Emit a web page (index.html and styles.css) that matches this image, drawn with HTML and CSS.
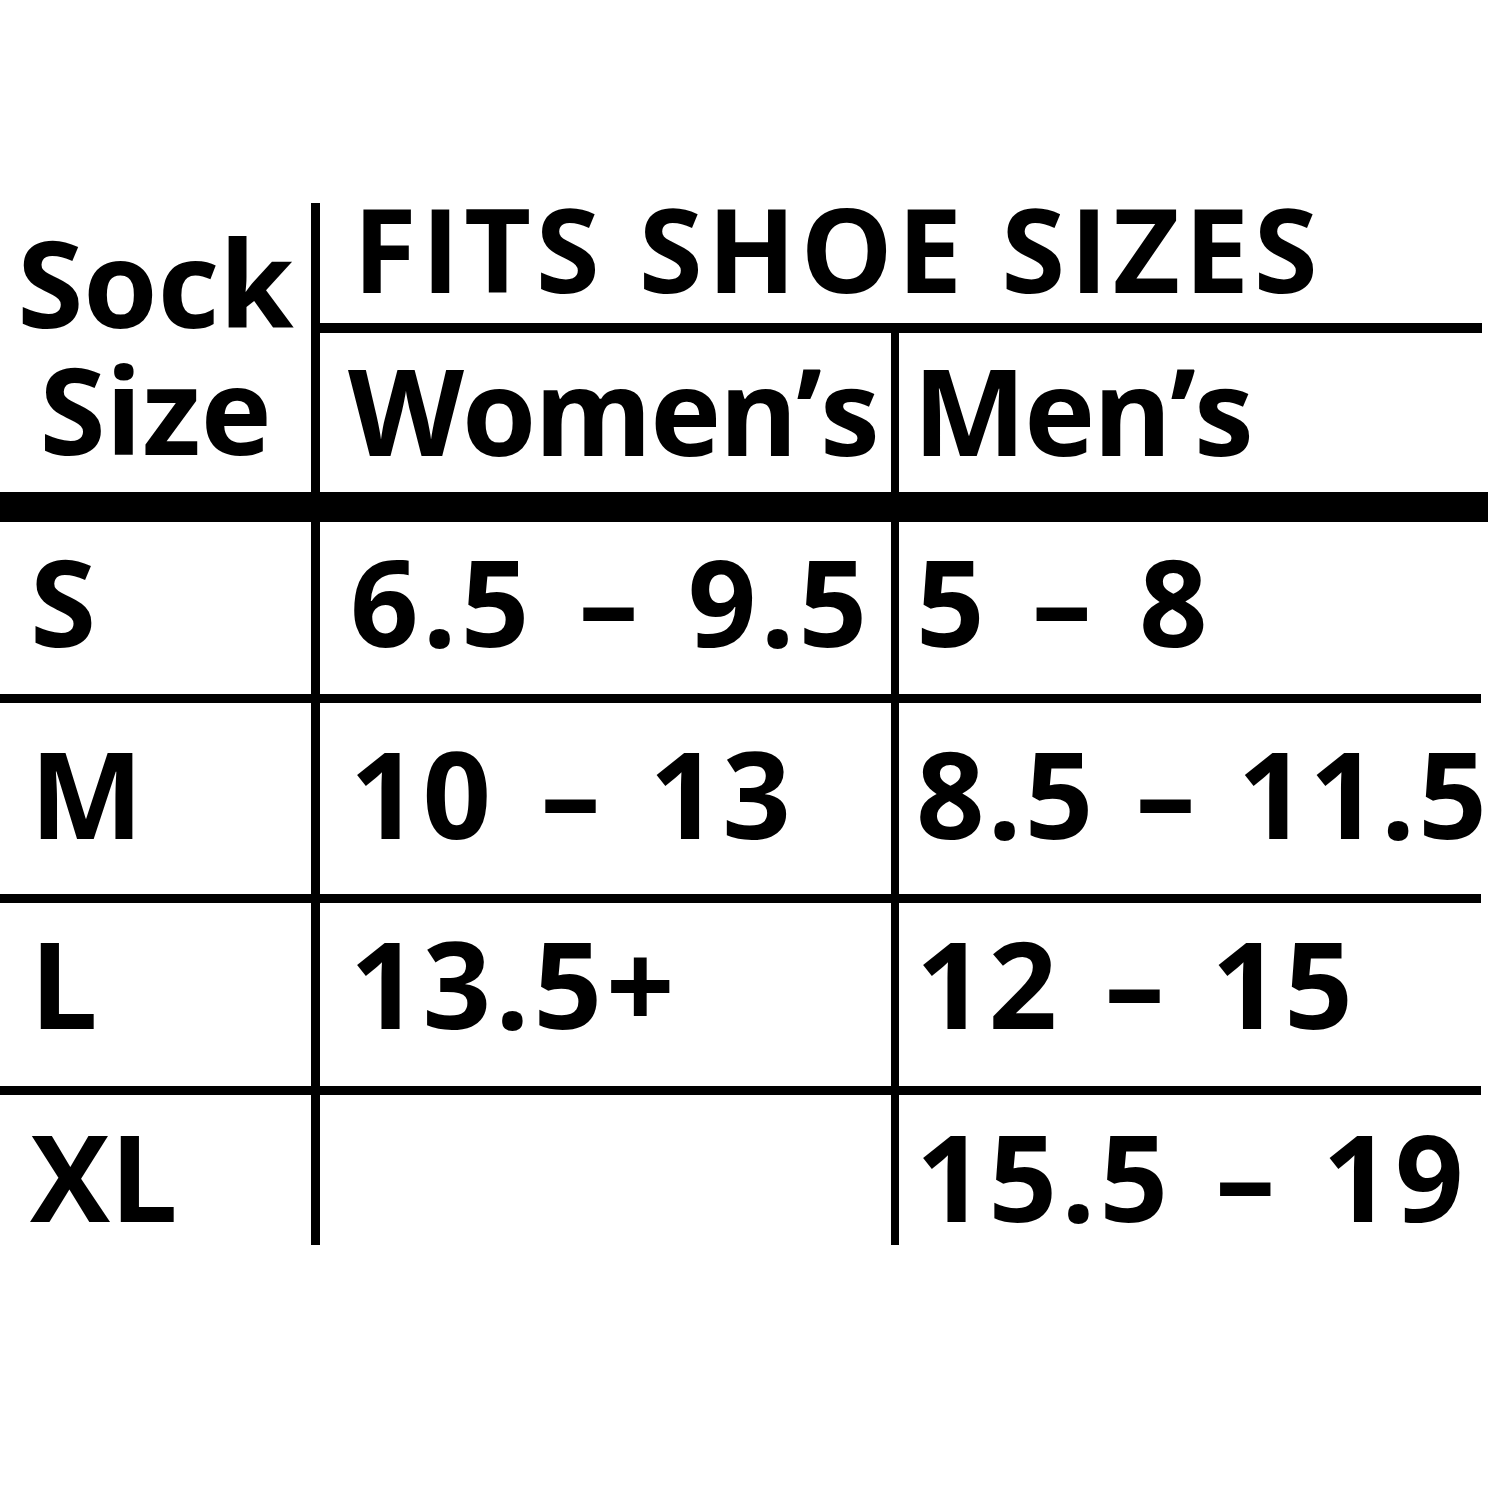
FILE: index.html
```html
<!DOCTYPE html>
<html lang="en">
<head>
<meta charset="utf-8">
<title>Sock Size Chart</title>
<link rel="stylesheet" href="styles.css">
</head>
<body>
<div class="chart">
  <div class="head">
    <div class="sock">
      <div class="sock-line">Sock</div>
      <div class="sock-line">Size</div>
    </div>
    <div class="fits">
      <div class="fits-title">FITS SHOE SIZES</div>
      <div class="genders">
        <div class="women">Women’s</div>
        <div class="men">Men’s</div>
      </div>
    </div>
  </div>
  <div class="bar"></div>
  <div class="rows">
    <div class="row row-s">
      <div class="c size">S</div>
      <div class="c w">6.5 – 9.5</div>
      <div class="c m">5 – 8</div>
    </div>
    <div class="row row-m">
      <div class="c size">M</div>
      <div class="c w">10 – 13</div>
      <div class="c m">8.5 – 11.5</div>
    </div>
    <div class="row row-l">
      <div class="c size">L</div>
      <div class="c w">13.5+</div>
      <div class="c m">12 – 15</div>
    </div>
    <div class="row row-xl">
      <div class="c size">XL</div>
      <div class="c w"></div>
      <div class="c m">15.5 – 19</div>
    </div>
  </div>
</div>
</body>
</html>
```
FILE: styles.css
```css
* { box-sizing: border-box; }
html, body { margin: 0; padding: 0; background: #fff; }
body {
  font-family: "Open Sans", "Noto Sans", sans-serif;
  font-weight: 700;
  color: #000;
  overflow: hidden;
}
.chart {
  padding-top: 203px;
  width: 1500px;
}
.head {
  display: flex;
  width: 1482px;
  height: 289px;
}
.sock {
  width: 311px;
  flex-shrink: 0;
  text-align: center;
  font-size: 120px;
  padding-top: 29px;
}
.sock-line {
  height: 127px;
  line-height: 100px;
}
.fits {
  flex: 1;
  border-left: 9px solid #000;
  display: flex;
  flex-direction: column;
}
.fits-title {
  height: 130px;
  border-bottom: 10px solid #000;
  font-size: 116px;
  line-height: 90px;
  padding-left: 33px;
  letter-spacing: 4.5px;
  white-space: nowrap;
}
.genders {
  display: flex;
  flex: 1;
  font-size: 120px;
  line-height: 120px;
}
.women {
  width: 571px;
  flex-shrink: 0;
  padding-left: 28px;
  padding-top: 17px;
  white-space: nowrap;
  letter-spacing: -2px;
}
.men {
  flex: 1;
  border-left: 8px solid #000;
  padding-left: 14px;
  padding-top: 17px;
  white-space: nowrap;
  letter-spacing: -2px;
}
.bar {
  height: 30px;
  width: 1488px;
  background: #000;
}
.rows {
  width: 1481px;
}
.row {
  display: flex;
  border-bottom: 9px solid #000;
  font-size: 120px;
  line-height: 120px;
  white-space: nowrap;
}
.row-s { height: 181px; }
.row-m { height: 200px; }
.row-l { height: 192px; }
.row-xl { height: 150px; border-bottom: 0; }
.size {
  width: 311px;
  flex-shrink: 0;
  padding-left: 30px;
}
.w {
  width: 580px;
  flex-shrink: 0;
  border-left: 9px solid #000;
  padding-left: 30px;
  letter-spacing: 4px;
  word-spacing: 10px;
}
.m {
  flex: 1;
  min-width: 0;
  border-left: 8px solid #000;
  padding-left: 17px;
  letter-spacing: 4px;
  word-spacing: 8px;
}
.row-m .m {
  letter-spacing: 3px;
  word-spacing: 5px;
}
.row-s .c { padding-top: 19px; }
.row-m .c { padding-top: 30px; }
.row-l .c { padding-top: 20px; }
.row-xl .c { padding-top: 21px; }
```
